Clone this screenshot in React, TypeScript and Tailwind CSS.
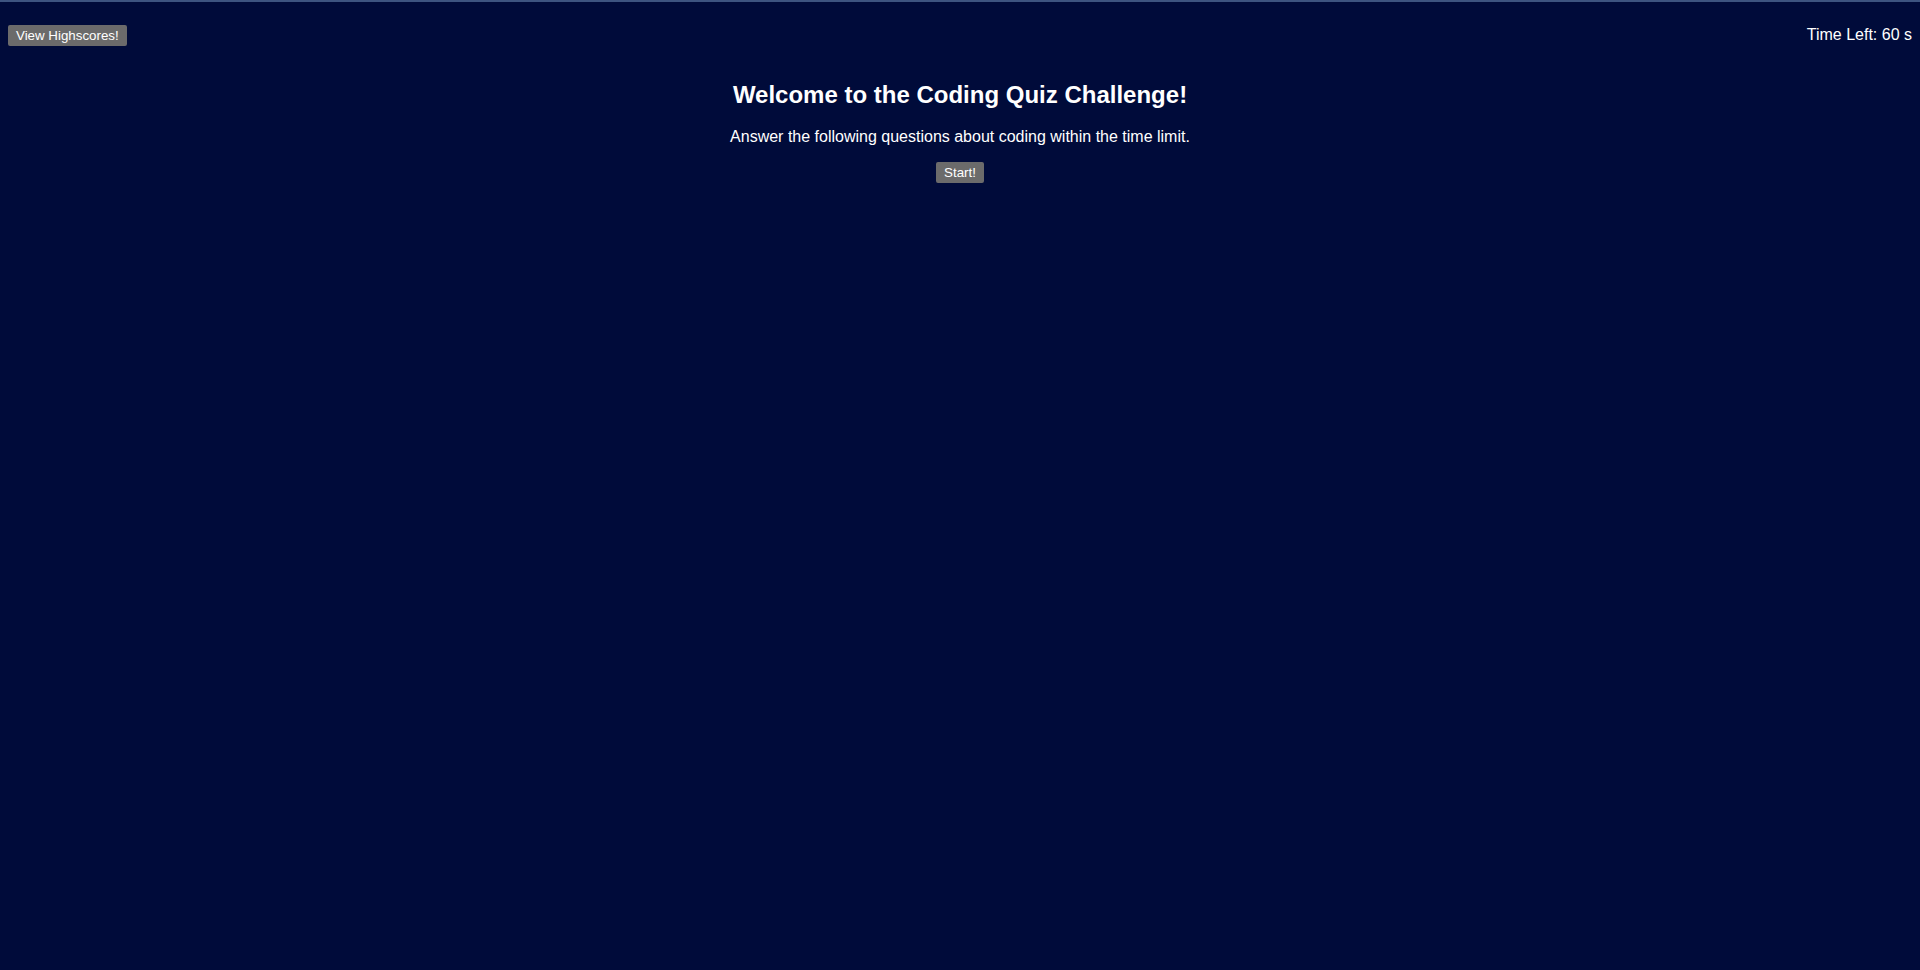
import React, { useState } from 'react';

const font = { fontFamily: '"Liberation Sans", Arial, sans-serif' };

export default function App() {
  const [timeLeft] = useState(60);

  return (
    <div
      className="min-h-[970px] w-full bg-[#000b3a] border-t-2 border-[#3d5480] text-white"
      style={font}
    >
      <header className="flex justify-between items-start px-2 pt-[22px]">
        <button className="mt-[1px] bg-[#6b6b6b] text-white text-[13.33px] leading-[15px] px-[6px] py-[1px] border-2 border-[#6b6b6b] rounded-[2px]">
          View Highscores!
        </button>
        <div className="mt-[2px] text-base leading-[18.4px]">Time Left: {timeLeft} s</div>
      </header>

      <main className="flex flex-col items-center">
        <h2 className="mt-[35px] text-2xl font-bold leading-[27.6px]">
          Welcome to the Coding Quiz Challenge!
        </h2>
        <p className="mt-[19px] text-base leading-[18.4px]">
          Answer the following questions about coding within the time limit.
        </p>
        <button className="mt-[16px] bg-[#6b6b6b] text-white text-[13.33px] leading-[15px] px-[6px] py-[1px] border-2 border-[#6b6b6b] rounded-[2px]">
          Start!
        </button>
      </main>
    </div>
  );
}
